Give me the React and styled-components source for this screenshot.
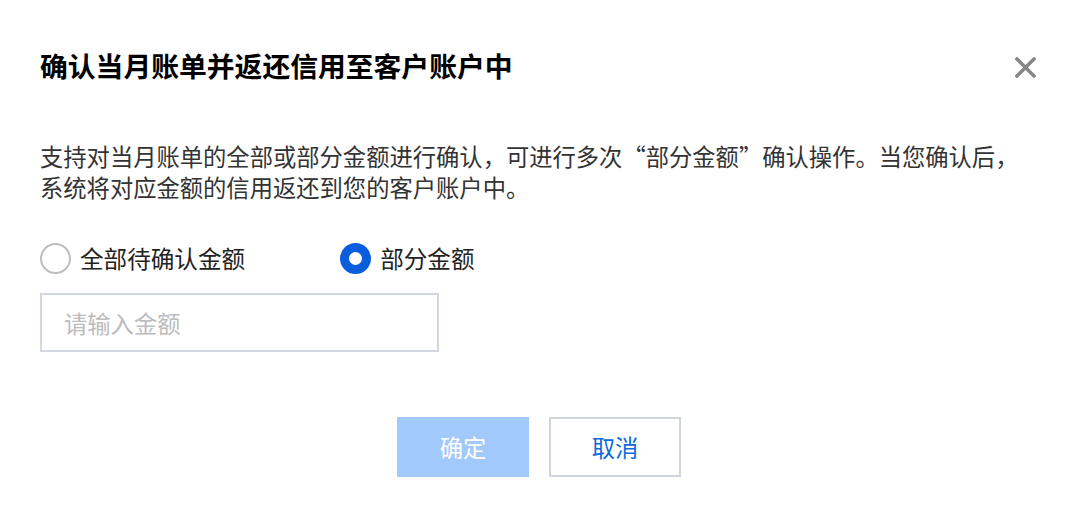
import React, { useState } from 'react';
import styled, { createGlobalStyle } from 'styled-components';

const GlobalStyle = createGlobalStyle`
  html, body {
    margin: 0;
    padding: 0;
    background: #fff;
  }
  body {
    font-family: "Noto Sans CJK SC", "Noto Sans", sans-serif;
  }
`;

const Dialog = styled.div`
  width: 1073px;
  height: 518px;
  box-sizing: border-box;
  padding: 49px 37px 0 40px;
  background: #fff;
  display: flex;
  flex-direction: column;
`;

const Header = styled.div`
  display: flex;
  justify-content: space-between;
  align-items: flex-start;
  height: 32px;
`;

const Title = styled.h3`
  margin: 0;
  font-size: 27.8px;
  line-height: 32px;
  font-weight: 700;
  color: #000;
`;

const CloseButton = styled.button`
  width: 21px;
  height: 21px;
  padding: 0;
  margin-top: 8px;
  border: none;
  background: none;
  cursor: pointer;
  display: flex;
  svg {
    display: block;
  }
`;

const Desc = styled.p`
  margin: 60px 0 0;
  padding-right: 3px;
  font-size: 23.3px;
  line-height: 31px;
  color: #333;
`;

const RadioGroup = styled.div`
  display: flex;
  align-items: center;
  gap: 95px;
  margin-top: 39px;
  height: 32px;
`;

const RadioItem = styled.label`
  display: flex;
  align-items: center;
  gap: 9px;
  cursor: pointer;
  font-size: 23.6px;
  line-height: 32px;
  color: #222;
`;

const RadioDot = styled.span`
  width: 31px;
  height: 31px;
  box-sizing: border-box;
  border-radius: 50%;
  border: ${({ checked }) => (checked ? '9px solid #0a5ddc' : '2px solid #bdbdbd')};
  background: #fff;
  flex-shrink: 0;
`;

const AmountInput = styled.input`
  margin-top: 19px;
  width: 399px;
  height: 59px;
  box-sizing: border-box;
  border: 2px solid #d3d8e0;
  padding: 0 20px 0 22px;
  font-family: inherit;
  font-size: 23.3px;
  color: #333;
  outline: none;
  &::placeholder {
    color: #bcbcbc;
  }
`;

const Footer = styled.div`
  display: flex;
  justify-content: center;
  gap: 20px;
  margin-top: 65px;
  padding-left: 2px;
`;

const Button = styled.button`
  width: 132px;
  height: 60px;
  box-sizing: border-box;
  font-family: inherit;
  font-size: 23.3px;
  cursor: pointer;
  border: ${({ primary }) => (primary ? 'none' : '2px solid #d0d4dc')};
  background: ${({ primary }) => (primary ? '#a2c9fb' : '#fff')};
  color: ${({ primary }) => (primary ? '#fff' : '#0b6ae0')};
`;

export default function App() {
  const [mode, setMode] = useState('part');

  return (
    <>
      <GlobalStyle />
      <Dialog>
        <Header>
          <Title>确认当月账单并返还信用至客户账户中</Title>
          <CloseButton aria-label="关闭">
            <svg width="21" height="21" viewBox="0 0 21 21">
              <path d="M2 2L19 19M19 2L2 19" stroke="#858585" strokeWidth="3.4" strokeLinecap="square" />
            </svg>
          </CloseButton>
        </Header>
        <Desc>
          支持对当月账单的全部或部分金额进行确认，可进行多次“部分金额”确认操作。当您确认后，系统将对应金额的信用返还到您的客户账户中。
        </Desc>
        <RadioGroup>
          <RadioItem onClick={() => setMode('all')}>
            <RadioDot checked={mode === 'all'} />
            全部待确认金额
          </RadioItem>
          <RadioItem onClick={() => setMode('part')}>
            <RadioDot checked={mode === 'part'} />
            部分金额
          </RadioItem>
        </RadioGroup>
        <AmountInput placeholder="请输入金额" />
        <Footer>
          <Button primary>确定</Button>
          <Button>取消</Button>
        </Footer>
      </Dialog>
    </>
  );
}
